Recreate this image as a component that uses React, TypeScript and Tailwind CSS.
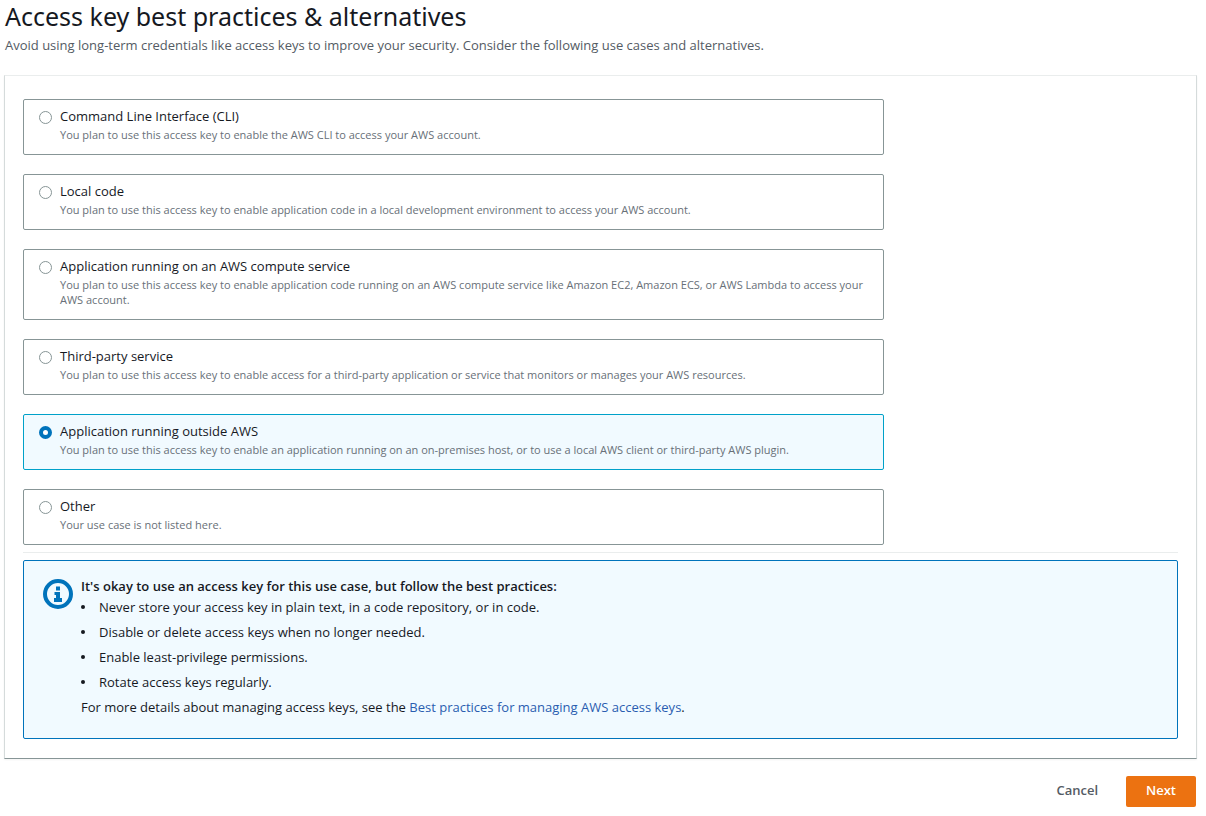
import React, { useState } from 'react';

interface UseCase {
  id: string;
  label: string;
  description: string;
}

const useCases: UseCase[] = [
  {
    id: 'cli',
    label: 'Command Line Interface (CLI)',
    description: 'You plan to use this access key to enable the AWS CLI to access your AWS account.'
  },
  {
    id: 'local',
    label: 'Local code',
    description:
      'You plan to use this access key to enable application code in a local development environment to access your AWS account.'
  },
  {
    id: 'compute',
    label: 'Application running on an AWS compute service',
    description:
      'You plan to use this access key to enable application code running on an AWS compute service like Amazon EC2, Amazon ECS, or AWS Lambda to access your AWS account.'
  },
  {
    id: 'third-party',
    label: 'Third-party service',
    description:
      'You plan to use this access key to enable access for a third-party application or service that monitors or manages your AWS resources.'
  },
  {
    id: 'outside',
    label: 'Application running outside AWS',
    description:
      'You plan to use this access key to enable an application running on an on-premises host, or to use a local AWS client or third-party AWS plugin.'
  },
  {
    id: 'other',
    label: 'Other',
    description: 'Your use case is not listed here.'
  }
];

const practices = [
  'Never store your access key in plain text, in a code repository, or in code.',
  'Disable or delete access keys when no longer needed.',
  'Enable least-privilege permissions.',
  'Rotate access keys regularly.'
];

interface UseCaseTileProps {
  useCase: UseCase;
  selected: boolean;
  onSelect: (id: string) => void;
}

const UseCaseTile: React.FC<UseCaseTileProps> = ({ useCase, selected, onSelect }) => {
  return (
    <label
      htmlFor={useCase.id}
      className={`flex gap-2 rounded-xs border pt-[6px] pr-2 pb-3 pl-[15px] ${
        selected ? 'border-[#00a1c9] bg-[#f1faff]' : 'border-[#879596] bg-white'
      }`}
    >
      <input
        type="radio"
        id={useCase.id}
        name="use-case"
        checked={selected}
        onChange={() => onSelect(useCase.id)}
        aria-describedby={`${useCase.id}-description`}
        className="mt-[5px] size-[13px] shrink-0 appearance-none rounded-full border border-[#879596] bg-white checked:border-4 checked:border-[#0073bb]"
      />
      <span className="flex flex-col gap-px">
        <span className="text-[13px] leading-5">{useCase.label}</span>
        <span id={`${useCase.id}-description`} className="text-[11px] leading-[15px] text-[#687078]">
          {useCase.description}
        </span>
      </span>
    </label>
  );
};

const InfoIcon = () => (
  <svg viewBox="0 0 30 30" className="size-[30px] shrink-0" fill="#0073bb" aria-hidden="true">
    <circle cx="15" cy="15" r="13" fill="none" stroke="#0073bb" strokeWidth="4" />
    <path d="M13 7.500h4v4h-4zM11.500 13h5.500v6h2v4h-8v-4h2v-3h-1.500z" />
  </svg>
);

export default function App() {
  const [selected, setSelected] = useState('outside');

  return (
    <main className="bg-white pr-[9px] pb-2 pl-1 font-['Open_Sans','Noto_Sans',sans-serif] text-[13px] leading-5 text-[#16191f]">
      {/* Header */}
      <header className="pb-5 pl-px">
        <h1 className="font-['Noto_Sans',sans-serif] text-[25px] leading-8">
          Access key best practices &amp; alternatives
        </h1>
        <p className="mt-[3px] text-[#545b64]">
          Avoid using long-term credentials like access keys to improve your security. Consider the following use
          cases and alternatives.
        </p>
      </header>

      <section className="border border-t-[#eaeded] border-r-[#d5dbdb] border-b-[#879596] border-l-[#d5dbdb] px-[18px] pt-[23px] pb-[19px] shadow-xs">
        {/* Use cases */}
        <div className="grid grid-cols-4 gap-5">
          <fieldset className="col-span-3 flex flex-col gap-[19px]" aria-label="Use case">
            {useCases.map(useCase => (
              <UseCaseTile
                key={useCase.id}
                useCase={useCase}
                selected={selected === useCase.id}
                onSelect={setSelected}
              />
            ))}
          </fieldset>
        </div>

        <hr className="mt-[7px] mb-[7px] border-[#eaeded]" />

        {/* Recommendation */}
        <div className="flex gap-2 rounded-xs border border-[#0073bb] bg-[#f1faff] px-[19px] pt-[15px] pb-[21px]">
          <div className="pt-[3px]">
            <InfoIcon />
          </div>
          <div>
            <h2 className="font-semibold">
              It's okay to use an access key for this use case, but follow the best practices:
            </h2>
            <ul className="mt-px flex flex-col gap-[5px]">
              {practices.map(practice => (
                <li
                  key={practice}
                  className="flex items-center gap-[14px] before:size-1 before:shrink-0 before:rounded-full before:bg-[#16191f]"
                >
                  {practice}
                </li>
              ))}
            </ul>
            <p className="mt-[5px]">
              For more details about managing access keys, see the{' '}
              <a href="#best-practices" className="text-[#2a5db0]">
                Best practices for managing AWS access keys
              </a>
              .
            </p>
          </div>
        </div>
      </section>

      {/* Actions */}
      <div className="mt-[17px] flex justify-end gap-2 pr-px">
        <button type="button" className="px-5 pt-1 pb-[7px] font-semibold text-[#545b64]">
          Cancel
        </button>
        <button type="button" className="rounded-xs bg-[#ec7211] px-5 pt-1 pb-[7px] font-semibold text-white">
          Next
        </button>
      </div>
    </main>
  );
}
